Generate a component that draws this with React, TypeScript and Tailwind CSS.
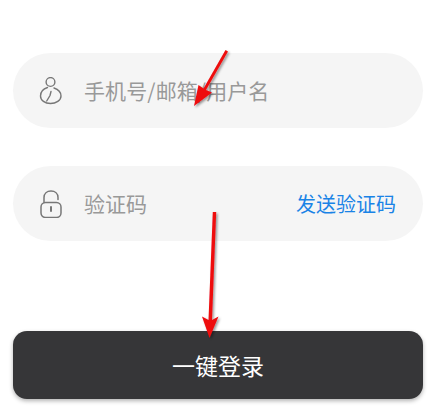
import React from 'react';

const UserIcon = () => (
  <svg width="24" height="28" viewBox="0 0 24 28" fill="none" stroke="#777" strokeWidth="1.4" strokeLinecap="round" className="shrink-0">
    <circle cx="11.5" cy="5" r="4.4" />
    <path d="M8.5 10.5C4 12 1.5 15 1.5 19C1.5 23.5 6 26.5 11.5 26.5C17 26.5 22 23.5 22 19C22 15.5 19.5 12.5 15 11" />
    <path d="M12 14.5L11 18.5L7.7 24" />
  </svg>
);

const LockIcon = () => (
  <svg width="22" height="28" viewBox="0 0 22 28" fill="none" stroke="#777" strokeWidth="1.5" strokeLinecap="round" className="shrink-0">
    <path d="M4 12.5V7.5C4 3.5 7 1 11 1C15 1 18 3.5 18 7.5V9.5" />
    <rect x="1" y="12.5" width="20" height="15" rx="4.5" />
    <path d="M11 17V21" strokeWidth="2" />
  </svg>
);

// hand drawn annotation arrows laid over the form
const Arrows = () => (
  <svg width="435" height="416" viewBox="0 0 435 416" className="absolute left-0 top-0 pointer-events-none">
    <defs>
      <filter id="arrowShadow" x="-30%" y="-30%" width="160%" height="160%">
        <feDropShadow dx="1.5" dy="1.5" stdDeviation="1.2" floodColor="#000" floodOpacity="0.4" />
      </filter>
    </defs>
    <g filter="url(#arrowShadow)" fill="#ee0a10">
      <path d="M225.5 50L228 51.5L206 90L212 92.5L194 106L198.5 85L203.5 88.5Z" />
      <path d="M212.8 212L216.2 212L212 320L218.5 316.5L209.5 338L202 316.5L208.5 320Z" />
    </g>
  </svg>
);

export default function App() {
  return (
    <div className="relative w-[435px] h-[416px] overflow-hidden bg-white pl-[13px] pr-[12px] pt-[53px] font-['Noto_Sans_CJK_SC',sans-serif]">
      <div className="h-[75px] rounded-[37.5px] bg-[#f5f5f5] flex items-center pl-[26px]">
        <UserIcon />
        <span className="ml-[21px] text-[21px] tracking-[0.1px] text-[#999999]">手机号/邮箱/用户名</span>
      </div>

      <div className="mt-[38px] h-[75px] rounded-[37.5px] bg-[#f5f5f5] flex items-center pl-[27px] pr-[27px]">
        <LockIcon />
        <span className="ml-[22px] text-[21px] text-[#999999]">验证码</span>
        <span className="ml-auto text-[20px] text-[#1a83e6]">发送验证码</span>
      </div>

      <button className="mt-[90px] w-full h-[68px] rounded-[14px] bg-[#363638] text-white text-[23px] shadow-[0_2px_4px_rgba(0,0,0,0.3)]">
        一键登录
      </button>

      <Arrows />
    </div>
  );
}
